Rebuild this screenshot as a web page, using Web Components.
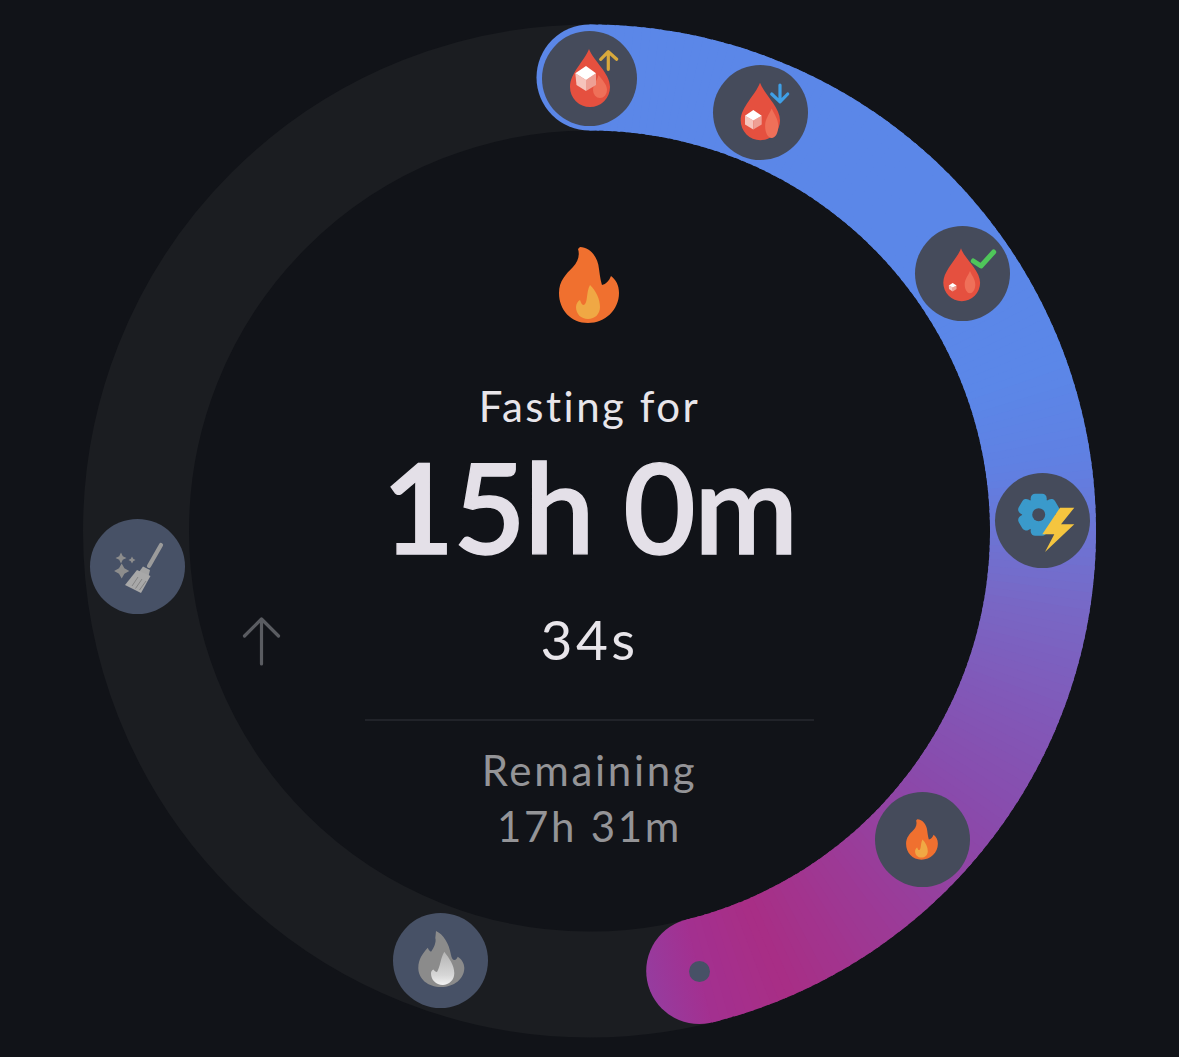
<!DOCTYPE html>
<html lang="en">
<head>
<meta charset="utf-8">
<title>Fasting timer</title>
<style>
html,body{margin:0;padding:0;background:#111318;}
</style>
</head>
<body>
<fast-dial>
  <dial-ring></dial-ring>
  <dial-node x="589" y="78"><drop-icon variant="up"></drop-icon></dial-node>
  <dial-node x="760" y="112"><drop-icon variant="down"></drop-icon></dial-node>
  <dial-node x="962.5" y="273.5"><drop-icon variant="check"></drop-icon></dial-node>
  <dial-node x="1042.5" y="520.5"><gear-bolt-icon></gear-bolt-icon></dial-node>
  <dial-node x="922.5" y="839.5"><flame-icon size="53"></flame-icon></dial-node>
  <dial-node x="440.5" y="960" tone="dim"><flame-icon size="96" mono></flame-icon></dial-node>
  <dial-node x="137.5" y="566.5" tone="dim"><broom-icon></broom-icon></dial-node>
  <dial-node x="699" y="971" r="10.5" tone="dim"></dial-node>
  <up-arrow></up-arrow>
  <fast-readout>
    <flame-icon slot="icon" size="100"></flame-icon>
    <span slot="label">Fasting for</span>
    <span slot="time">15h 0m</span>
    <span slot="seconds">34s</span>
    <span slot="remaining-label">Remaining</span>
    <span slot="remaining">17h 31m</span>
  </fast-readout>
</fast-dial>
<script>
const NS='http://www.w3.org/2000/svg';
function mk(tagName,css,html){
  customElements.define(tagName,class extends HTMLElement{
    connectedCallback(){
      if(this.shadowRoot) return;
      const r=this.attachShadow({mode:'open'});
      r.innerHTML='<style>'+css+'</style>'+(typeof html==='function'?html(this):html);
    }
  });
}
mk('fast-dial',
 ':host{display:block;position:relative;width:1179px;height:1057px;background:#111318;overflow:hidden;font-family:Lato,"Open Sans",sans-serif;}',
 '<slot></slot>');

/* ring: track + angle-interpolated progress arc */
const CX=589.5,CY=531,R=453.5,W=106,END=166;
const STOPS=[[0,[91,135,232]],[70,[91,135,232]],[82,[96,128,226]],[99,[120,104,198]],[115,[131,85,181]],[127,[138,74,171]],[138,[152,62,156]],[157,[168,46,133]],[166,[163,48,144]]];
function colAt(a){
  for(let i=1;i<STOPS.length;i++){
    if(a<=STOPS[i][0]){
      const [a0,c0]=STOPS[i-1],[a1,c1]=STOPS[i],t=(a-a0)/(a1-a0);
      return 'rgb('+c0.map((v,k)=>Math.round(v+(c1[k]-v)*t)).join(',')+')';
    }
  }
  return 'rgb('+STOPS[STOPS.length-1][1].join(',')+')';
}
function pt(a){const t=a*Math.PI/180;return [CX+R*Math.sin(t),CY-R*Math.cos(t)];}
mk('dial-ring',':host{position:absolute;inset:0;display:block;} svg{display:block;}',
 ()=>{
  let segs='';
  for(let a=0;a<END;a+=1){
    const e=Math.min(a+1.4,END),[x0,y0]=pt(a),[x1,y1]=pt(e);
    segs+=`<path d="M${x0.toFixed(2)} ${y0.toFixed(2)}A${R} ${R} 0 0 1 ${x1.toFixed(2)} ${y1.toFixed(2)}" stroke="${colAt(a+.5)}"/>`;
  }
  const [ex,ey]=pt(END),[sx,sy]=pt(0);
  const t=END*Math.PI/180, gx=ex+Math.cos(t)*53, gy=ey+Math.sin(t)*53;
  return `<svg xmlns="${NS}" width="1179" height="1057" viewBox="0 0 1179 1057">
   <defs><linearGradient id="cap" gradientUnits="userSpaceOnUse" x1="${ex}" y1="${ey}" x2="${gx}" y2="${gy}"><stop offset="0" stop-color="rgb(163,48,144)"/><stop offset="1" stop-color="#963c9f"/></linearGradient></defs>
   <circle cx="${CX}" cy="${CY}" r="${R}" fill="none" stroke="#1b1d21" stroke-width="${W}"/>
   <circle cx="${sx}" cy="${sy}" r="${W/2}" fill="#5b87e8"/>
   <circle cx="${ex}" cy="${ey}" r="${W/2}" fill="url(#cap)"/>
   <g fill="none" stroke-width="${W}">${segs}</g></svg>`;
 });

/* round badge placed on the dial canvas */
mk('dial-node',
 `:host{position:absolute;display:flex;align-items:center;justify-content:center;border-radius:50%;
   left:calc(var(--x)*1px - var(--r)*1px);top:calc(var(--y)*1px - var(--r)*1px);
   width:calc(var(--r)*2px);height:calc(var(--r)*2px);background:#454b5b;}
  :host([tone=dim]){background:#475166;}
  ::slotted(*){flex:none;}`,
 el=>{
   el.style.setProperty('--x',el.getAttribute('x'));
   el.style.setProperty('--y',el.getAttribute('y'));
   el.style.setProperty('--r',el.getAttribute('r')||47.5);
   return '<slot></slot>';
 });

function dropSvg(v){
  const d={
   up:{drop:'M48 19C43.500 31 29 43 29 57a20 20 0 0 0 40 0C69 43 52.500 31 48 19Z',
       inner:'M57.500 45C61 50 66 54 66 60a7 8 0 0 1-14 0C52 55 56 51 57.500 45Z',
       top:'45,36 55,43.300 45,50 34.300,43.300',left:'34.300,43.300 45,50 45,61 35.500,55',right:'55,43.300 45,50 45,61 55,55',
       mark:'<path d="M67.300 39.300V22M59.700 29.300 67.300 21.700 75.700 29.300" stroke="#d9a93c" stroke-width="3.200"/>'},
   down:{drop:'M48 18.700C43.500 31 28.700 43 28.700 56.500a19.650 19.650 0 0 0 39.300 0C68 43 52.500 31 48 18.700Z',
       inner:'M59.700 44.500C62 50 66.300 55 66.300 62c0 7-3 12-6.600 12s-6.600-5-6.600-12C53.100 55 57.400 50 59.700 44.500Z',
       top:'41.300,46 49.700,51.700 41.300,56.500 33,51.700',left:'33,51.700 41.300,56.500 41.300,65.500 33,60.500',right:'49.700,51.700 41.300,56.500 41.300,65.500 49.700,60.500',
       mark:'<path d="M68 21V37.500M59.700 30 68 37.800 75.700 30" stroke="#3f9fe6" stroke-width="3.200"/>'},
   check:{drop:'M46 22.300C42.500 33 28.300 44 28.300 56.800a18.400 18.400 0 0 0 36.800 0C65.100 44 49.500 33 46 22.300Z',
       inner:'M55 45C57 50 60.300 53 60.300 58.500c0 5-2.500 8.800-5.300 8.800s-5.300-3.800-5.300-8.800C49.700 53 53 50 55 45Z',
       top:'37.700,57 41.500,59.500 37.700,61.500 33.800,59.500',left:'33.800,59.500 37.700,61.500 37.700,65.500 34,63',right:'41.500,59.500 37.700,61.500 37.700,65.500 41.500,63',
       mark:'<path d="M58.300 35 66 40 78.700 26" stroke="#4fc65a" stroke-width="5"/>'}
  }[v];
  return `<svg xmlns="${NS}" width="96" height="96" viewBox="0 0 96 96">
   <path d="${d.drop}" fill="#e5503f"/><path d="${d.inner}" fill="#ef7059"/>
   <polygon points="${d.left}" fill="#f6c4bc"/><polygon points="${d.right}" fill="#ee9f94"/><polygon points="${d.top}" fill="#fff"/>
   <g fill="none" stroke-linecap="round" stroke-linejoin="round">${d.mark}</g></svg>`;
}
const block=':host{display:block;line-height:0;}svg{display:block;}';
mk('drop-icon',block,el=>dropSvg(el.getAttribute('variant')));

mk('gear-bolt-icon',block,()=>{
  const cx=43.7,cy=41.700;let p='';
  for(let i=0;i<6;i++){const a=i*60;p+=`<rect x="${cx-8}" y="${cy-21}" width="16" height="12" rx="4.5" transform="rotate(${a} ${cx} ${cy})"/>`;}
  return `<svg xmlns="${NS}" width="96" height="96" viewBox="0 0 96 96">
   <g fill="#3a9acb">${p}<circle cx="${cx}" cy="${cy}" r="16.500"/></g>
   <circle cx="${cx}" cy="${cy}" r="6.500" fill="#454b5b"/>
   <polygon points="65,34.700 79.300,34.700 66,51.300 79.300,51.300 50,79 59.300,61.300 47.300,61.300" fill="#f5c53f"/></svg>`;
});

const FLAME='M40 12C50 12 58 22 59 34C60 42 61 47 62 50C66 49 69 46 71 41C76 45 79 50 79 58C79 75 65 88 48 88C31 88 19 75 19 58C19 46 26 39 33 32C38 27 40 20 38 14Z';
const INNER='M50 50C56 56 60 64 60 72C60 79 55 84 48 84C41 84 36 79 36 72C36 69 38 66 40 65C41 68 42 70 44 70C48 68 46 57 50 50Z';
const GREY='M43 19C50 22 56 31 58 43C58.500 46 60 48 61.300 48C63 48 64 46.500 64.700 44.700C68.500 47 71.300 51 71.300 56C71.300 67 61 75 48 75C35 75 25.300 67 25.300 56C25.300 47 30 41 34.700 35.700C35.500 37.500 36.500 39 38 39.700C41 36 43.500 30 42.300 26Z';
const GREY_IN='M51.300 39.700C56 46 61.300 53 61.300 61.300C61.300 68 56 73 49.700 73C43 73 38 68 38 61.300C38 59.500 39 58 40.500 57.500C41.500 59 42.500 60 44 60C47.500 54 47.500 46 51.300 39.700Z';
mk('flame-icon',block,el=>{
  const s=el.getAttribute('size')||100,m=el.hasAttribute('mono');
  if(m) return `<svg xmlns="${NS}" width="${s}" height="${s}" viewBox="0 0 96 96">
   <defs><linearGradient id="g" x1="0" y1="0" x2="0" y2="1"><stop offset="0" stop-color="#b4b4b4"/><stop offset=".7" stop-color="#d6d6d6"/><stop offset="1" stop-color="#f2f2f2"/></linearGradient></defs>
   <path d="${GREY}" fill="#8b8b8b"/><path d="${GREY_IN}" fill="url(#g)"/></svg>`;
  return `<svg xmlns="${NS}" width="${s}" height="${s}" viewBox="0 0 100 100">
   <path d="${FLAME}" fill="#f0702f"/><path d="${INNER}" fill="#f0a844"/></svg>`;
});

mk('broom-icon',block,
 `<svg xmlns="http://www.w3.org/2000/svg" width="96" height="96" viewBox="0 0 96 96">
   <path d="M71 26 59 47" stroke="#9b9b9b" stroke-width="4.200" stroke-linecap="round" fill="none"/>
   <polygon points="53,47.500 60,51 58.500,57.500 49,53" fill="#a3a3a3"/>
   <polygon points="47,51 60.500,57 51,74 35,66" fill="#a8a8a8"/>
   <path d="M48 58 42 67M52 60 45.500 69.500M56 62 49.500 71" stroke="#7f7f7f" stroke-width=".9" fill="none"/>
   <g fill="#8d8d8d">
    <path d="M31.700 44.500 34.400 49.300 39.300 52 34.400 54.700 31.700 59.500 29 54.700 24.100 52 29 49.300Z"/>
    <path d="M31 33.500 32.800 37.200 36.500 39 32.800 40.800 31 44.500 29.200 40.800 25.500 39 29.200 37.200Z"/>
    <path d="M42 37.500 43.200 39.800 45.500 41 43.200 42.200 42 44.500 40.800 42.200 38.500 41 40.800 39.800Z"/>
   </g></svg>`);

mk('up-arrow',':host{position:absolute;left:241px;top:616px;display:block;line-height:0;}',
 `<svg xmlns="http://www.w3.org/2000/svg" width="41" height="51" viewBox="0 0 41 51">
   <path d="M20.500 48V3M3.500 20 20.500 3 37.500 20" fill="none" stroke="#5a5c61" stroke-width="3.200" stroke-linecap="round" stroke-linejoin="round"/></svg>`);

mk('fast-readout',
 `:host{position:absolute;inset:0;display:flex;flex-direction:column;align-items:center;padding-top:235px;box-sizing:border-box;color:#e8e5ea;text-align:center;}
  .icon{height:100px;margin-bottom:47px;}
  .label{font-size:42px;line-height:50px;letter-spacing:2.5px;font-weight:400;margin-top:-1px;margin-bottom:1px;}
  .time{font-size:125px;line-height:130px;margin-top:9px;margin-bottom:2px;font-weight:600;letter-spacing:-1.3px;-webkit-text-stroke:1.4px #e4e0e8;color:#e4e0e8;}
  .secs{font-size:55px;line-height:60px;margin-top:36px;letter-spacing:3.4px;}
  .rule{width:449px;height:2px;background:#212329;margin:50px 0 24px;}
  .rem{color:#949497;font-size:42px;line-height:50px;letter-spacing:2.7px;}
  .rem + .rem{margin-top:6px;}`,
 `<div class="icon"><slot name="icon"></slot></div>
  <div class="label"><slot name="label"></slot></div>
  <div class="time"><slot name="time"></slot></div>
  <div class="secs"><slot name="seconds"></slot></div>
  <div class="rule"></div>
  <div class="rem"><slot name="remaining-label"></slot></div>
  <div class="rem"><slot name="remaining"></slot></div>`);
</script>
</body>
</html>
